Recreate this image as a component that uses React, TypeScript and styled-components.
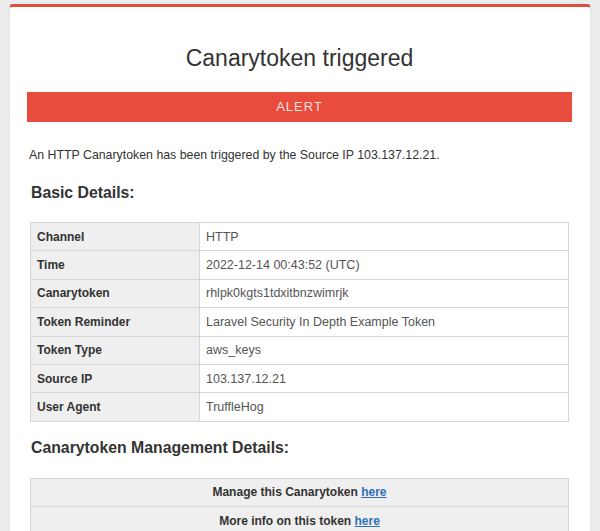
import React from "react"
import styled, { createGlobalStyle } from "styled-components"

const GlobalStyle = createGlobalStyle`
  body {
    margin: 0;
    background: #ececec;
    font-family: "Liberation Sans", Arial, sans-serif;
    color: #333;
  }
`

const details: [string, string][] = [
  ["Channel", "HTTP"],
  ["Time", "2022-12-14 00:43:52 (UTC)"],
  ["Canarytoken", "rhlpk0kgts1tdxitbnzwimrjk"],
  ["Token Reminder", "Laravel Security In Depth Example Token"],
  ["Token Type", "aws_keys"],
  ["Source IP", "103.137.12.21"],
  ["User Agent", "TruffleHog"],
]

const App = () => {
  return (
    <>
      <GlobalStyle />
      <Card>
        <Title>Canarytoken triggered</Title>
        <AlertBar>ALERT</AlertBar>
        <Intro>
          An HTTP Canarytoken has been triggered by the Source IP 103.137.12.21.
        </Intro>
        <SectionHeading>Basic Details:</SectionHeading>
        <DetailsTable>
          <tbody>
            {details.map(([label, value]) => (
              <tr key={label}>
                <LabelCell>{label}</LabelCell>
                <ValueCell>{value}</ValueCell>
              </tr>
            ))}
          </tbody>
        </DetailsTable>
        <SectionHeading $top={16}>Canarytoken Management Details:</SectionHeading>
        <DetailsTable $top={20}>
          <tbody>
            <tr>
              <ManageCell>
                Manage this Canarytoken <Link href="#">here</Link>
              </ManageCell>
            </tr>
            <tr>
              <ManageCell>
                More info on this token <Link href="#">here</Link>
              </ManageCell>
            </tr>
          </tbody>
        </DetailsTable>
      </Card>
    </>
  )
}

const Card = styled.div`
  margin: 4px 9px 0 9px;
  background: #fff;
  border-top: 3px solid #dc4f3d;
  border-left: 1px solid #e2e2e2;
  border-right: 1px solid #e2e2e2;
  border-radius: 4px 4px 0 0;
  padding: 37px 18px 40px 17px;
  min-height: 600px;
`

const Title = styled.h1`
  margin: 0 0 20px;
  text-align: center;
  font-size: 23px;
  line-height: 28px;
  font-weight: 400;
  color: #333;
`

const AlertBar = styled.div`
  height: 30px;
  line-height: 30px;
  background: #e74c3c;
  color: rgba(255, 255, 255, 0.85);
  text-align: center;
  font-size: 13px;
  letter-spacing: 1px;
`

const Intro = styled.p`
  margin: 24px 0 0 2px;
  font-size: 12.35px;
  line-height: 18px;
  color: #333;
`

const SectionHeading = styled.h2<{ $top?: number }>`
  margin: ${({ $top }) => $top ?? 19}px 0 0 4px;
  font-size: 15.8px;
  line-height: 20px;
  font-weight: 700;
  color: #333;
`

const DetailsTable = styled.table<{ $top?: number }>`
  margin: ${({ $top }) => $top ?? 19}px 0 0 3px;
  width: calc(100% - 6px);
  border-collapse: collapse;
  font-size: 12.5px;
`

const Cell = styled.td`
  height: 28.4px;
  padding: 0 6px;
  border: 1px solid #d6d6d6;
  box-sizing: border-box;
`

const LabelCell = styled(Cell)`
  width: 169px;
  background: #efefef;
  font-weight: 700;
  font-size: 12px;
  color: #333;
`

const ValueCell = styled(Cell)`
  color: #555;
`

const ManageCell = styled(Cell)`
  background: #efefef;
  text-align: center;
  font-weight: 700;
  font-size: 12px;
  color: #333;
`

const Link = styled.a`
  color: #2f6fb5;
  text-decoration: underline;
`

export default App
